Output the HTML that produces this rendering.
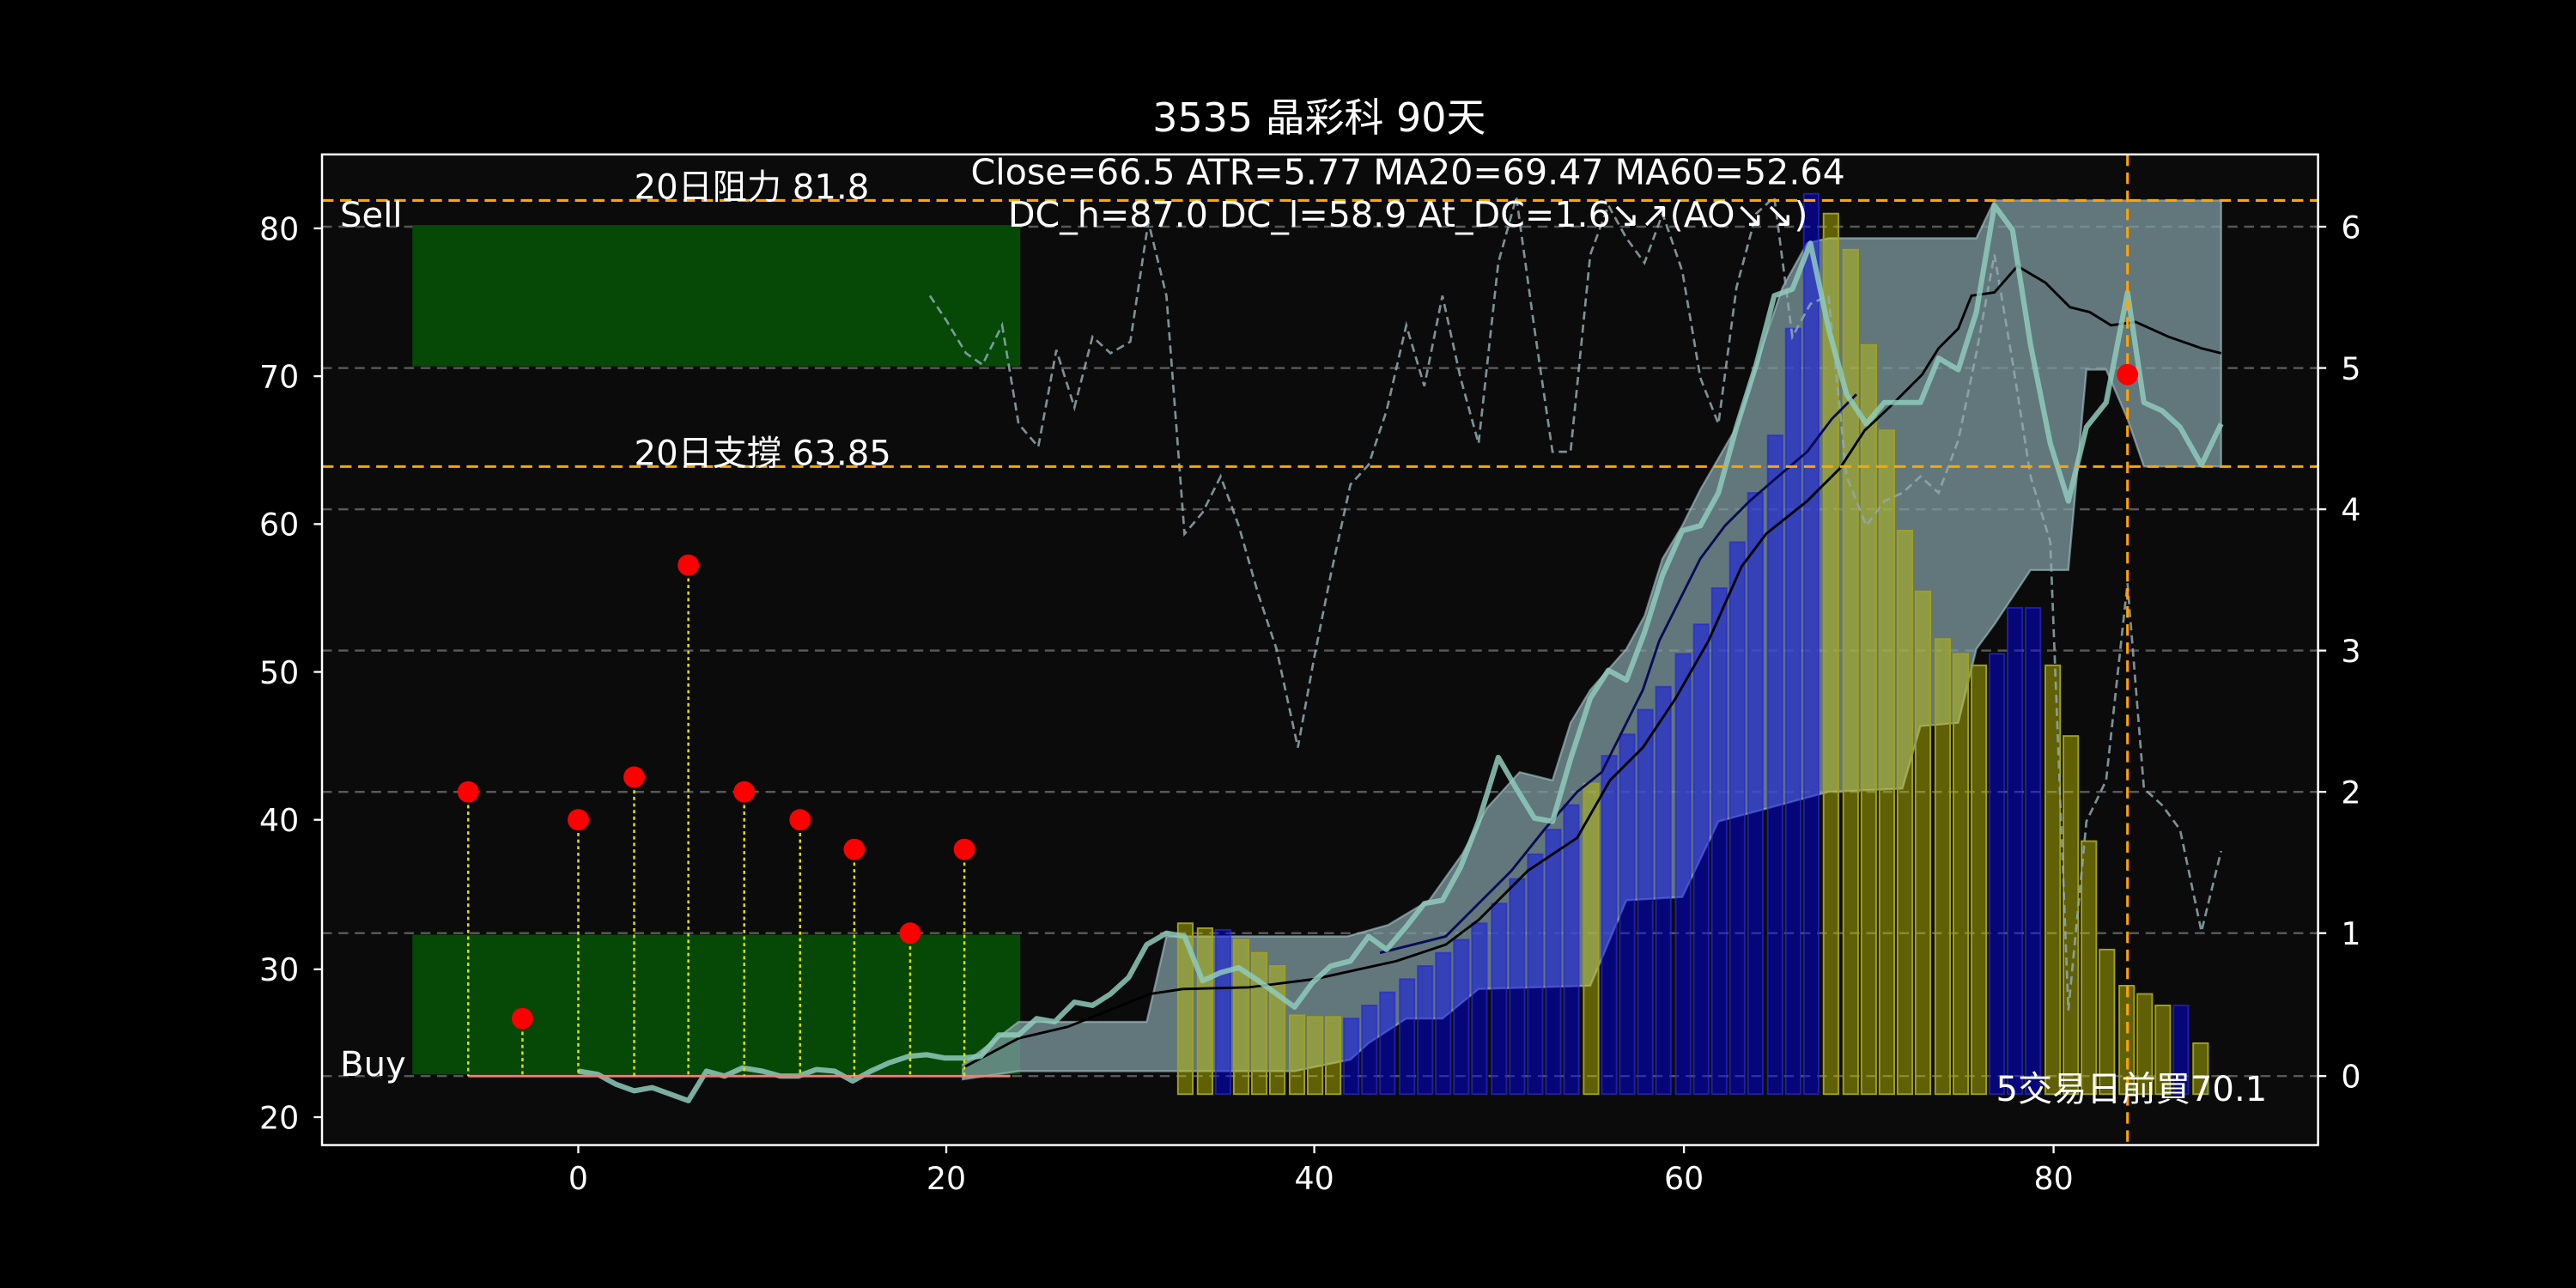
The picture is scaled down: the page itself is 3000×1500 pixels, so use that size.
<!DOCTYPE html>
<html><head><meta charset="utf-8"><style>
html,body{margin:0;padding:0;background:#000;}
svg{display:block}
text{font-family:"DejaVu Sans","Liberation Sans","Noto Sans CJK TC",sans-serif;fill:#fff}
</style></head><body>
<svg width="3000" height="1500" viewBox="0 0 1568 784" xmlns="http://www.w3.org/2000/svg">
<rect x="0" y="0" width="1568" height="784" fill="#000"/>
<rect x="196" y="94" width="1215" height="603" fill="#0b0b0b"/>
<!-- grid -->
<g stroke="#6a6a6a" stroke-width="1.3" stroke-dasharray="6,4" opacity="0.8">
<line x1="196" y1="138" x2="1411" y2="138"/><line x1="196" y1="224" x2="1411" y2="224"/>
<line x1="196" y1="310" x2="1411" y2="310"/><line x1="196" y1="396" x2="1411" y2="396"/>
<line x1="196" y1="482" x2="1411" y2="482"/><line x1="196" y1="568" x2="1411" y2="568"/>
<line x1="196" y1="655" x2="1411" y2="655"/>
</g>
<!-- green zones -->
<rect x="251" y="137" width="370" height="86" fill="#064806"/>
<rect x="251" y="569" width="370" height="85" fill="#064806"/>
<!-- donchian band -->
<polygon fill="#7f9ca3" fill-opacity="0.75" stroke="#a8c8cc" stroke-opacity="0.6" stroke-width="1.2" points="586,648 620,622 698,622 710,570 820,570 845,563 870,548 890,520 905,492 925,470 945,475 956,440 968,420 990,395 1001,375 1012,340 1024,320 1035,298 1057,260 1069,222 1085,175 1100,148 1113,145 1203,145 1214,122 1352,122 1352,284 1305,284 1295,255 1282,225 1270,225 1259,347 1236,347 1214,380 1203,395 1192,440 1169,442 1158,480 1113,482 1046,500 1024,546 990,548 968,600 900,602 878,620 856,620 833,635 822,645 788,652 620,652 586,657"/>
<!-- bars -->
<g stroke-width="1">
<g fill="#c8c800" fill-opacity="0.45" stroke="#a0a020">
<rect x="717" y="562" width="9" height="104"/><rect x="729" y="565" width="9" height="101"/>
<rect x="751" y="572" width="9" height="94"/><rect x="762" y="580" width="9" height="86"/><rect x="773" y="588" width="9" height="78"/>
<rect x="785" y="618" width="9" height="48"/><rect x="796" y="619" width="9" height="47"/><rect x="807" y="619" width="9" height="47"/>
<rect x="964" y="477" width="9" height="189"/>
<rect x="1110" y="130" width="9" height="536"/><rect x="1122" y="152" width="9" height="514"/><rect x="1133" y="210" width="9" height="456"/>
<rect x="1144" y="262" width="9" height="404"/><rect x="1155" y="323" width="9" height="343"/><rect x="1166" y="360" width="9" height="306"/>
<rect x="1178" y="389" width="9" height="277"/><rect x="1189" y="398" width="9" height="268"/><rect x="1200" y="405" width="9" height="261"/>
<rect x="1245" y="405" width="9" height="261"/><rect x="1256" y="448" width="9" height="218"/><rect x="1267" y="512" width="9" height="154"/>
<rect x="1278" y="578" width="9" height="88"/><rect x="1290" y="600" width="9" height="66"/><rect x="1301" y="605" width="9" height="61"/>
<rect x="1312" y="612" width="9" height="54"/><rect x="1335" y="635" width="9" height="31"/>
</g>
<g fill="#0000ff" fill-opacity="0.45" stroke="#2a2ad0" stroke-opacity="0.7">
<rect x="740" y="566" width="9" height="100"/>
<rect x="818" y="620" width="9" height="46"/><rect x="829" y="612" width="9" height="54"/><rect x="840" y="604" width="9" height="62"/>
<rect x="852" y="596" width="9" height="70"/><rect x="863" y="588" width="9" height="78"/><rect x="874" y="580" width="9" height="86"/>
<rect x="885" y="572" width="9" height="94"/><rect x="896" y="562" width="9" height="104"/><rect x="908" y="550" width="9" height="116"/>
<rect x="919" y="535" width="9" height="131"/><rect x="930" y="520" width="9" height="146"/><rect x="941" y="505" width="9" height="161"/>
<rect x="952" y="490" width="9" height="176"/>
<rect x="975" y="460" width="9" height="206"/><rect x="986" y="447" width="9" height="219"/><rect x="997" y="432" width="9" height="234"/>
<rect x="1008" y="418" width="9" height="248"/><rect x="1020" y="398" width="9" height="268"/><rect x="1031" y="380" width="9" height="286"/>
<rect x="1042" y="358" width="9" height="308"/><rect x="1053" y="330" width="9" height="336"/><rect x="1064" y="300" width="9" height="366"/>
<rect x="1076" y="265" width="9" height="401"/><rect x="1087" y="200" width="9" height="466"/><rect x="1098" y="118" width="9" height="548"/>
<rect x="1211" y="398" width="9" height="268"/><rect x="1222" y="370" width="9" height="296"/><rect x="1233" y="370" width="9" height="296"/>
<rect x="1323" y="612" width="9" height="54"/>
</g>
</g>
<!-- dashed ATR line -->
<polyline fill="none" stroke="#8fa9b0" stroke-width="1.4" stroke-dasharray="5,3" opacity="0.85" points="566,180 576,195 588,215 598,222 610,198 620,258 632,272 643,213 654,248 665,205 676,215 688,208 699,135 710,180 721,325 732,312 743,290 754,320 766,362 777,395 790,455 800,400 810,350 822,295 833,283 844,250 856,198 867,235 878,180 889,230 900,270 912,160 923,120 934,200 945,275 956,275 968,155 979,125 990,145 1001,160 1012,130 1024,165 1035,230 1046,258 1057,175 1069,130 1080,120 1091,205 1102,185 1113,180 1124,290 1136,320 1147,305 1158,300 1169,290 1180,300 1192,268 1203,215 1214,155 1225,220 1236,290 1248,330 1259,615 1270,500 1282,475 1295,355 1305,480 1316,490 1327,505 1340,567 1352,518"/>
<!-- MA60 navy -->
<polyline fill="none" stroke="#0a0a55" stroke-width="1.5" points="840,580 880,570 900,550 920,530 940,505 960,482 975,470 990,440 1000,420 1010,390 1020,370 1035,340 1050,320 1065,305 1080,292 1100,275 1115,255 1130,240"/>
<!-- MA20 black -->
<polyline fill="none" stroke="#000" stroke-width="1.5" points="586,650 620,632 650,625 700,605 720,602 760,601 800,596 850,585 880,575 900,560 930,530 960,510 980,475 1000,455 1020,425 1040,390 1060,345 1075,325 1100,305 1120,285 1135,262 1150,248 1170,228 1180,212 1192,200 1200,180 1214,178 1228,162 1245,172 1260,187 1272,190 1285,198 1300,196 1320,205 1340,212 1352,215"/>
<!-- close line -->
<polyline fill="none" stroke="#8fcabc" stroke-opacity="0.85" stroke-width="3.2" stroke-linejoin="round" points="352,652 364,654 375,660 386,664 397,662 408,666 419,670 430,652 441,655 452,650 464,652 475,655 486,655 497,651 508,652 519,658 530,652 541,647 553,643 564,642 575,644 586,644 597,643 608,630 620,630 631,620 642,622 654,610 665,612 676,605 687,595 698,575 710,568 721,570 732,597 743,592 754,589 766,597 777,605 788,613 799,598 810,588 822,585 833,570 844,578 856,564 867,550 878,548 889,528 900,500 912,461 923,480 934,498 945,500 956,462 968,425 979,408 990,414 1001,385 1012,350 1024,323 1035,320 1046,300 1057,260 1069,222 1080,180 1091,176 1102,148 1113,200 1124,240 1136,258 1147,245 1169,245 1180,218 1192,225 1203,190 1214,125 1225,140 1236,210 1248,270 1259,305 1270,260 1282,245 1295,178 1305,245 1316,250 1327,260 1340,283 1352,258"/>
<!-- orange lines -->
<g stroke="#ffa500" stroke-width="1.6" stroke-dasharray="7,4">
<line x1="196" y1="122" x2="1411" y2="122"/><line x1="196" y1="284" x2="1411" y2="284"/>
<line x1="1295" y1="94" x2="1295" y2="697"/>
</g>
<!-- buy stems -->
<line x1="285" y1="655" x2="615" y2="655" stroke="#f08070" stroke-width="1.5"/>
<g stroke="#e0e000" stroke-width="1.3" stroke-dasharray="2,2">
<line x1="285" y1="482" x2="285" y2="655"/><line x1="318" y1="620" x2="318" y2="655"/><line x1="352" y1="499" x2="352" y2="655"/>
<line x1="386" y1="473" x2="386" y2="655"/><line x1="419" y1="344" x2="419" y2="655"/><line x1="453" y1="482" x2="453" y2="655"/>
<line x1="487" y1="499" x2="487" y2="655"/><line x1="520" y1="517" x2="520" y2="655"/><line x1="554" y1="568" x2="554" y2="655"/>
<line x1="587" y1="517" x2="587" y2="655"/>
</g>
<g fill="#ff0000">
<circle cx="285" cy="482" r="6.5"/><circle cx="318" cy="620" r="6.5"/><circle cx="352" cy="499" r="6.5"/>
<circle cx="386" cy="473" r="6.5"/><circle cx="419" cy="344" r="6.5"/><circle cx="453" cy="482" r="6.5"/>
<circle cx="487" cy="499" r="6.5"/><circle cx="520" cy="517" r="6.5"/><circle cx="554" cy="568" r="6.5"/>
<circle cx="587" cy="517" r="6.5"/><circle cx="1295" cy="228" r="6.5"/>
</g>
<!-- frame -->
<rect x="196" y="94" width="1215" height="603" fill="none" stroke="#fff" stroke-width="1.3"/>
<!-- ticks -->
<g stroke="#fff" stroke-width="1.2">
<line x1="191" y1="139" x2="196" y2="139"/><line x1="191" y1="229" x2="196" y2="229"/><line x1="191" y1="319" x2="196" y2="319"/>
<line x1="191" y1="409" x2="196" y2="409"/><line x1="191" y1="499" x2="196" y2="499"/><line x1="191" y1="590" x2="196" y2="590"/>
<line x1="191" y1="680" x2="196" y2="680"/>
<line x1="1411" y1="138" x2="1416" y2="138"/><line x1="1411" y1="224" x2="1416" y2="224"/><line x1="1411" y1="310" x2="1416" y2="310"/>
<line x1="1411" y1="396" x2="1416" y2="396"/><line x1="1411" y1="482" x2="1416" y2="482"/><line x1="1411" y1="568" x2="1416" y2="568"/>
<line x1="1411" y1="655" x2="1416" y2="655"/>
<line x1="352" y1="697" x2="352" y2="702"/><line x1="576" y1="697" x2="576" y2="702"/><line x1="800" y1="697" x2="800" y2="702"/>
<line x1="1025" y1="697" x2="1025" y2="702"/><line x1="1250" y1="697" x2="1250" y2="702"/>
</g>
<g font-size="19" text-anchor="end">
<text x="182" y="146">80</text><text x="182" y="236">70</text><text x="182" y="326">60</text><text x="182" y="416">50</text>
<text x="182" y="506">40</text><text x="182" y="597">30</text><text x="182" y="687">20</text>
</g>
<g font-size="19">
<text x="1425" y="145">6</text><text x="1425" y="231">5</text><text x="1425" y="317">4</text><text x="1425" y="403">3</text>
<text x="1425" y="489">2</text><text x="1425" y="575">1</text><text x="1425" y="662">0</text>
</g>
<g font-size="19" text-anchor="middle">
<text x="352" y="724">0</text><text x="576" y="724">20</text><text x="800" y="724">40</text><text x="1025" y="724">60</text><text x="1250" y="724">80</text>
</g>
<text x="803" y="80" font-size="24" text-anchor="middle">3535 晶彩科 90天</text>
<text x="857" y="112" font-size="21.5" text-anchor="middle">Close=66.5 ATR=5.77 MA20=69.47 MA60=52.64</text>
<text x="857" y="138" font-size="21.5" text-anchor="middle">DC_h=87.0 DC_l=58.9 At_DC=1.6↘↗(AO↘↘)</text>
<text x="386" y="121" font-size="21">20日阻力 81.8</text>
<text x="386" y="283" font-size="21">20日支撐 63.85</text>
<text x="207" y="138" font-size="21">Sell</text>
<text x="207" y="655" font-size="21">Buy</text>
<text x="1380" y="670" font-size="21" text-anchor="end">5交易日前買70.1</text>
</svg>
</body></html>
